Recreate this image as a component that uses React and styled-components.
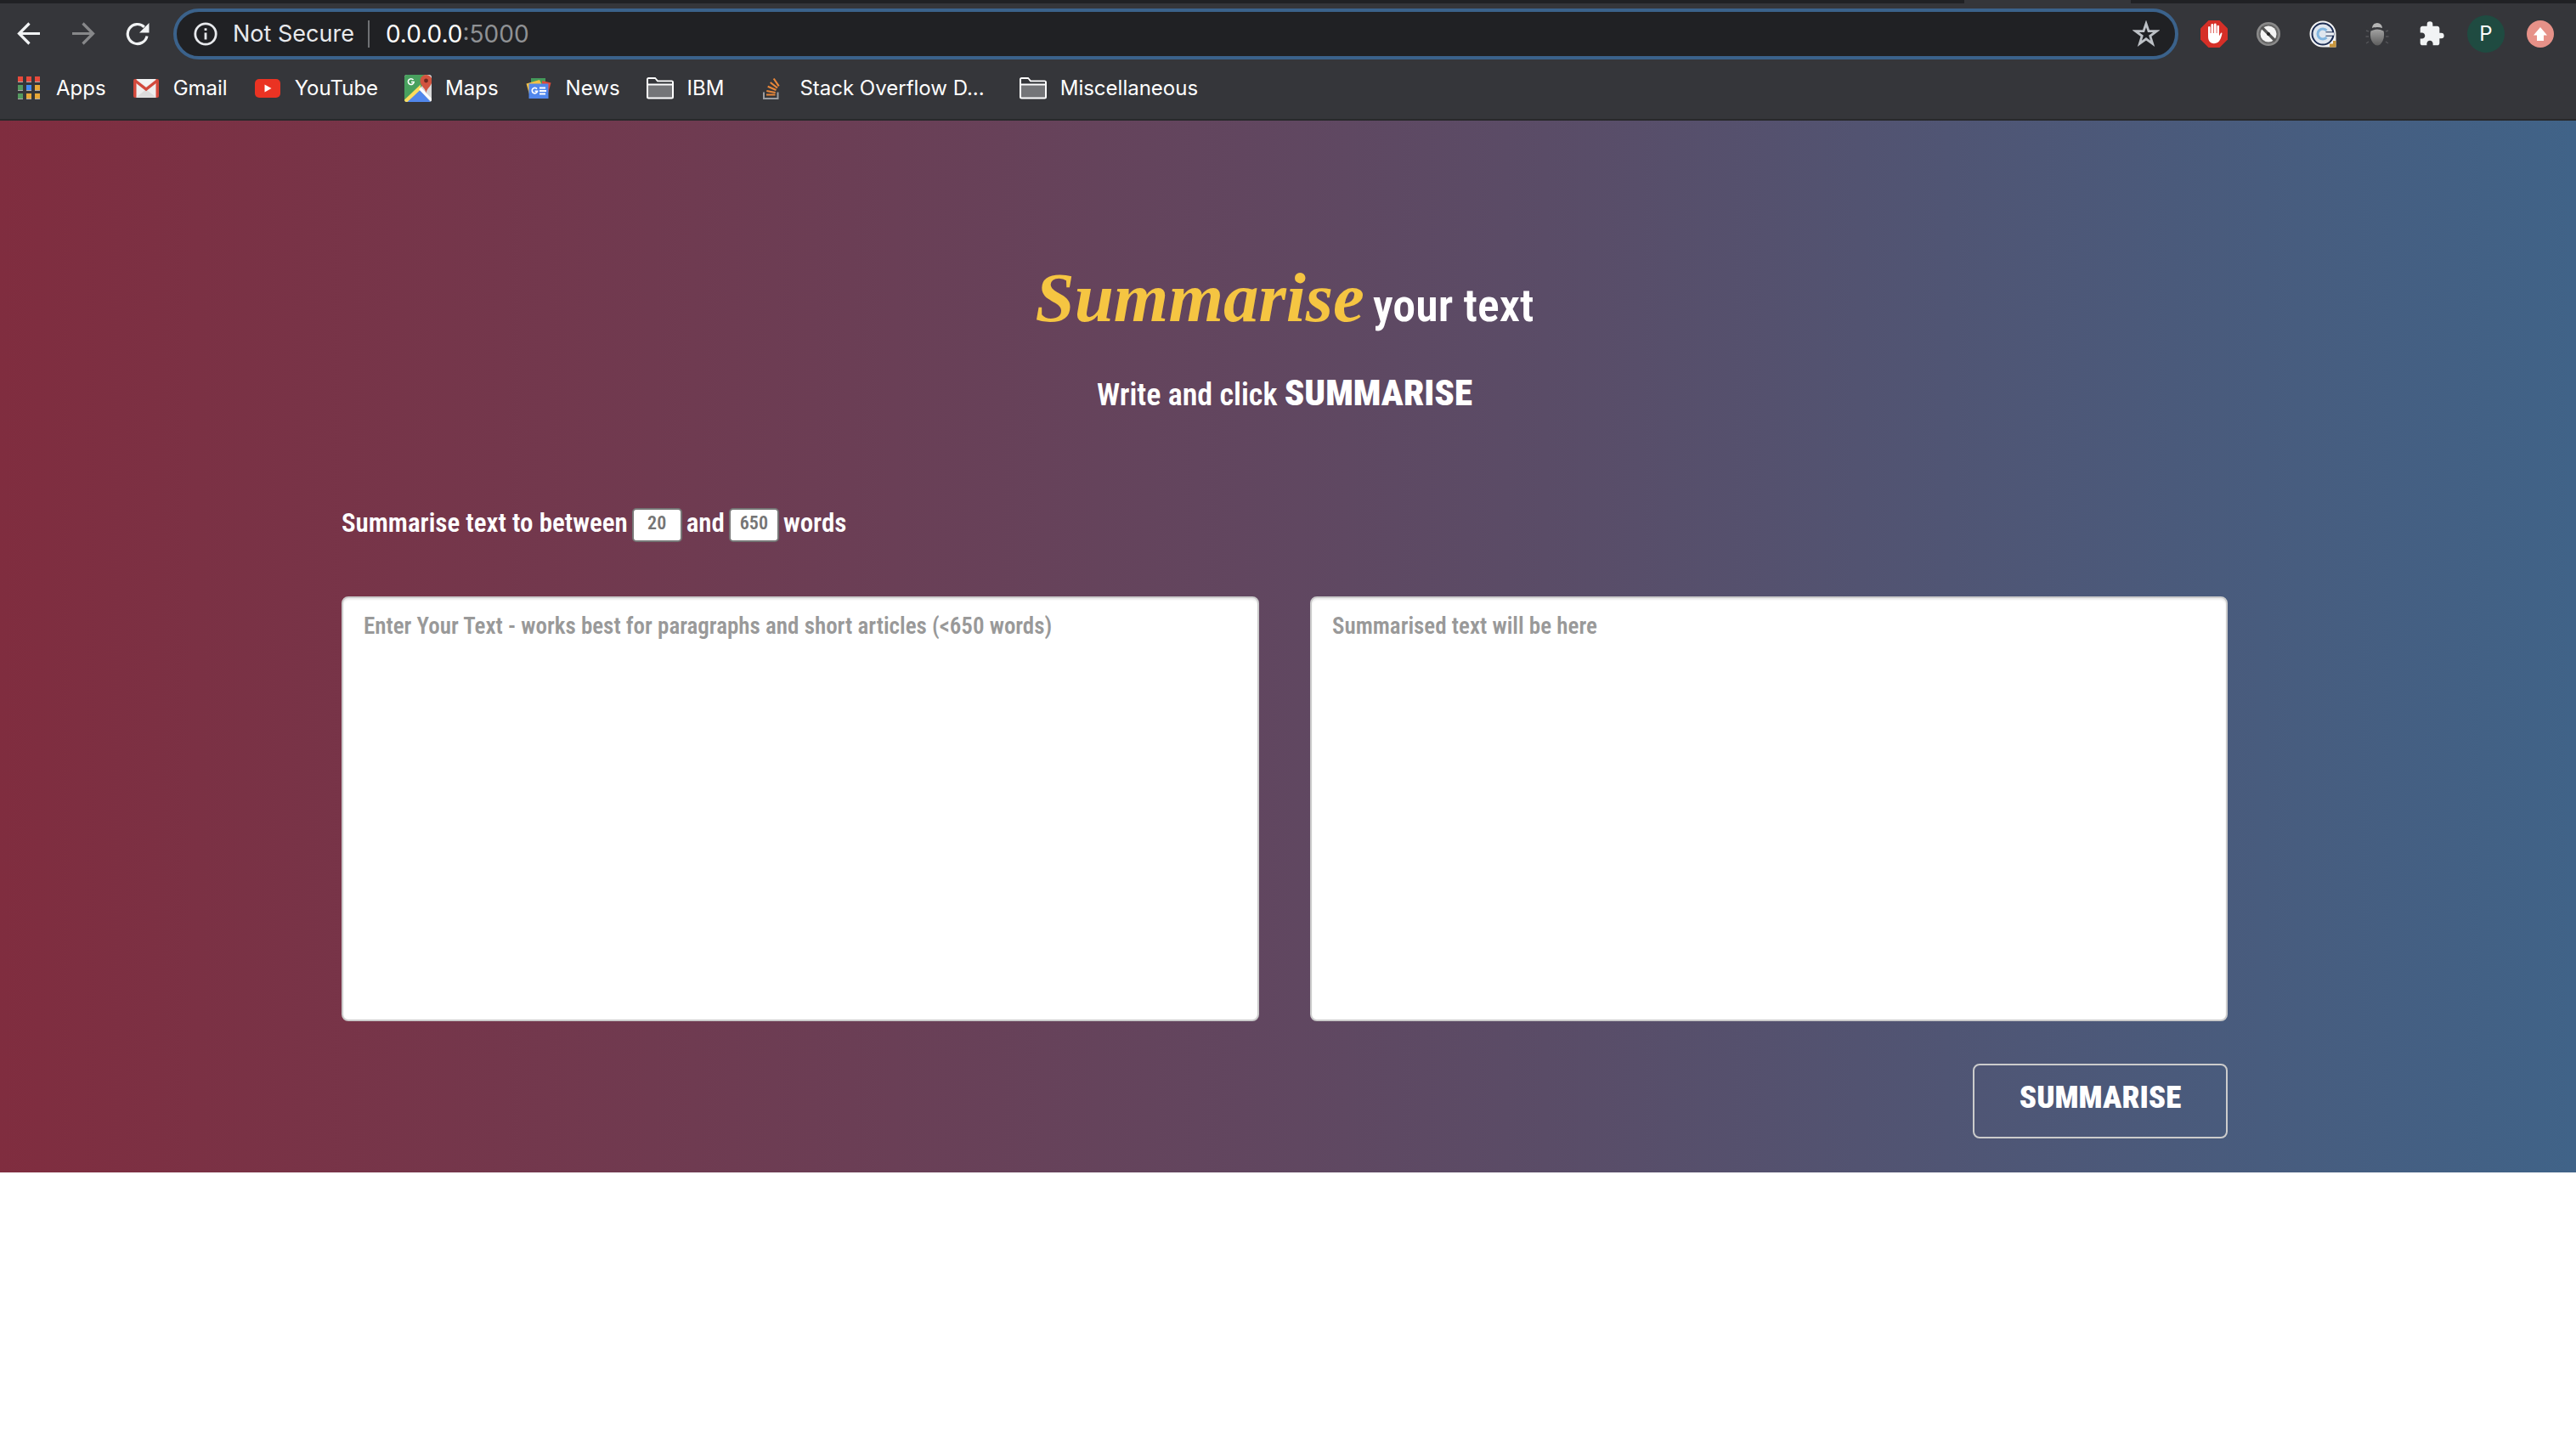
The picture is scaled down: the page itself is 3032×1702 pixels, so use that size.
import React from "react";
import styled, { createGlobalStyle } from "styled-components";

const uiFont = `Inter, Roboto, "Liberation Sans", sans-serif`;
const pageFont = `"Roboto Condensed", Roboto, "Liberation Sans", sans-serif`;

const GlobalStyle = createGlobalStyle`
  *, *::before, *::after { box-sizing: border-box; }
  body { margin: 0; background: #fff; }
  svg { display: block; }
`;

/* ---------- browser chrome ---------- */

const Chrome = styled.header`
  background: #35363a;
  border-bottom: 2px solid #28292b;
  font-family: ${uiFont};
  color: #fff;
`;

const TabStrip = styled.div`
  display: flex;
  justify-content: flex-end;
  height: 4px;
  background: #202124;
  padding-right: 524px;
`;

const ActiveTab = styled.div`
  width: 196px;
  background: #35363a;
`;

const Toolbar = styled.div`
  display: flex;
  align-items: center;
  height: 72px;
  padding: 0 10px 0 2px;
`;

const ToolButton = styled.button`
  flex: none;
  display: flex;
  align-items: center;
  justify-content: center;
  width: 64px;
  height: 60px;
  padding: 0;
  border: 0;
  background: none;
  color: ${(p) => p.$tone || "#f1f3f4"};
`;

const Omnibox = styled.div`
  flex: 1;
  display: flex;
  align-items: center;
  height: 60px;
  margin: 0 10px;
  padding: 0 18px 0 20px;
  border: 4px solid #3b628b;
  border-radius: 30px;
  background: #202124;
`;

const Security = styled.span`
  display: flex;
  align-items: center;
  gap: 18px;
  padding-right: 16px;
  border-right: 2px solid #6f7174;
  font-size: 27px;
  line-height: 32px;
  color: #e8eaed;
  white-space: nowrap;
`;

const Address = styled.div`
  flex: 1;
  padding-left: 19px;
  font-size: 28px;
  line-height: 32px;
  color: #fff;
`;

const Port = styled.span`
  color: #8f9194;
`;

const StarButton = styled.button`
  display: flex;
  padding: 0;
  border: 0;
  background: none;
`;

const Avatar = styled.span`
  display: grid;
  place-items: center;
  width: 44px;
  height: 44px;
  border-radius: 50%;
  background: #1f4b41;
  color: #fff;
  font: 24px/44px ${uiFont};
`;

const Bookmarks = styled.nav`
  display: flex;
  align-items: center;
  gap: 31px;
  height: 64px;
  padding: 0 18px 8px;
`;

const Bookmark = styled.a`
  display: flex;
  align-items: center;
  gap: 16px;
  padding-left: ${(p) => (p.$wide ? "10px" : "0")};
  font-size: 24px;
  line-height: 32px;
  color: #fff;
  text-decoration: none;
  white-space: nowrap;
`;

/* ---------- page ---------- */

const Hero = styled.main`
  padding: 142px 8px 40px 0;
  background: linear-gradient(to right, #802d3f 0%, #5a4c67 60%, #406388 100%);
  font-family: ${pageFont};
  font-weight: 600;
  color: #fff;
`;

const Container = styled.form`
  width: 100%;
  max-width: 2220px;
  margin: 0 auto;
`;

const Title = styled.h1`
  display: flex;
  justify-content: center;
  align-items: baseline;
  gap: 10px;
  margin: 0;
  font-size: 54px;
  line-height: 132px;
  font-weight: 600;
`;

const Script = styled.span`
  font-family: "Liberation Serif", serif;
  font-style: italic;
  font-weight: 700;
  font-size: 83px;
  color: #f5c542;
`;

const Lead = styled.p`
  margin: 0;
  text-align: center;
  font-size: 36px;
  line-height: 72px;
`;

const Heavy = styled.strong`
  font-weight: 900;
  font-size: 43px;
`;

const Range = styled.div`
  display: flex;
  align-items: center;
  gap: 5px;
  margin-top: 97px;
`;

const RangeLabel = styled.label`
  padding-bottom: 4px;
  font-size: 31px;
  line-height: 36px;
`;

const CountInput = styled.input`
  width: 59px;
  height: 40px;
  padding: 0 0 6px;
  border: 2px solid #767676;
  border-radius: 5px;
  background: #fff;
  font: 600 22px/28px ${pageFont};
  text-align: center;
  color: #333;
  &::placeholder { color: #757575; opacity: 1; }
`;

const Panels = styled.div`
  display: grid;
  grid-template-columns: 1fr 1fr;
  gap: 60px;
  margin-top: 64px;
`;

const TextPanel = styled.textarea`
  display: block;
  width: 100%;
  height: 500px;
  padding: 14px 24px;
  border: 2px solid #ccc;
  border-radius: 8px;
  background: #fff;
  box-shadow: inset 0 2px 2px rgba(0, 0, 0, 0.075);
  font: 600 27px/38px ${pageFont};
  color: #555;
  resize: none;
  &::placeholder { color: #999; opacity: 1; }
`;

const Actions = styled.div`
  display: flex;
  justify-content: flex-end;
  margin-top: 50px;
`;

const SubmitButton = styled.button`
  width: 300px;
  height: 88px;
  padding: 0 0 8px;
  border: 2px solid #ccc;
  border-radius: 8px;
  background: transparent;
  font: 900 37px/44px ${pageFont};
  color: #fff;
`;

/* ---------- icons ---------- */

const Arrow = ({ back }) => (
  <svg width="28" height="28" viewBox="0 0 28 28" fill="none" stroke="currentColor" strokeWidth="3.2">
    {back ? <path d="M27 13.5H3M14.5 1.5L2.5 13.5l12 12" /> : <path d="M1 13.5h24M13.5 1.5l12 12-12 12" />}
  </svg>
);

const Reload = () => (
  <svg width="28" height="28" viewBox="0 0 28 28">
    <path d="M25 16.5A11.5 11.5 0 1 1 21.8 5.8" fill="none" stroke="currentColor" strokeWidth="3.2" />
    <path d="M27.5 1v11.5H16z" fill="currentColor" />
  </svg>
);

const Info = () => (
  <svg width="28" height="28" viewBox="0 0 28 28">
    <circle cx="14" cy="14" r="12.2" fill="none" stroke="#e8eaed" strokeWidth="2.8" />
    <path d="M12.6 7.3h2.8v2.8h-2.8zM12.6 12.4h2.8v8.2h-2.8z" fill="#e8eaed" />
  </svg>
);

const Star = () => (
  <svg width="32" height="32" viewBox="0 0 32 32">
    <path d="M16 3.8l3 8.8 9.3.1-7.5 5.6 2.8 9-7.6-5.5-7.6 5.5 2.8-9-7.5-5.6 9.3-.1z" fill="none" stroke="#bdc1c6" strokeWidth="2.8" />
  </svg>
);

const Blocker = () => (
  <svg width="32" height="32" viewBox="0 0 32 32">
    <path d="M9.5 0h13L32 9.5v13L22.5 32h-13L0 22.5v-13z" fill="#d52f27" />
    <path d="M9 17V8.2a1.3 1.3 0 0 1 2.6 0V15h.8V5.5a1.4 1.4 0 0 1 2.8 0V15h.7V5a1.4 1.4 0 0 1 2.8 0v10h.7V7a1.3 1.3 0 0 1 2.6 0v11.5l1.500-3c.6-1.400 2.200-1.200 1.900.3-1 4.200-2.400 11.400-9.400 11.400C11 27.200 9 23.500 9 19z" fill="#fff" />
  </svg>
);

const Disabled = () => (
  <svg width="30" height="30" viewBox="0 0 30 30">
    <circle cx="15" cy="15" r="14" fill="#8a8a8a" />
    <circle cx="15" cy="15" r="11.5" fill="#666" />
    <circle cx="15" cy="15" r="9.5" fill="#f4f4f4" />
    <path d="M7 7l16 16" stroke="#555" strokeWidth="3.2" />
    <circle cx="15" cy="15" r="2" fill="#222" />
  </svg>
);

const Target = () => (
  <svg width="32" height="32" viewBox="0 0 32 32">
    <path d="M16 .5a15.5 15.5 0 1 0 0 31h15.5V16A15.5 15.5 0 0 0 16 .5z" fill="#f4f4f4" />
    <circle cx="16" cy="16" r="12.5" fill="#dfe6ee" stroke="#1b2c52" strokeWidth="2" />
    <path d="M20.5 12a6 6 0 1 0 0 8" fill="none" stroke="#82b6e0" strokeWidth="3" />
    <path d="M20 14.2h9v3.6h-9z" fill="#eef2f6" />
    <path d="M19.5 13.8H29M19.5 18.2H29" stroke="#1b2c52" strokeWidth="1" />
    <path d="M31.5 24v7.5H24v-4h4V24z" fill="#c9963c" />
  </svg>
);

const Bug = () => (
  <svg width="30" height="30" viewBox="0 0 30 30">
    <defs>
      <linearGradient id="bugBody" x1="0" y1="0" x2="0" y2="1">
        <stop offset="0" stopColor="#a2a2a2" />
        <stop offset="1" stopColor="#5e5e5e" />
      </linearGradient>
    </defs>
    <path d="M5 12L2 11M5 18H1.5M5 24l-3 2M25 12l3-1M25 18h3.5M25 24l3 2" stroke="#55565a" strokeWidth="1.5" />
    <path d="M9 8a6 6 0 0 1 12 0q-6-2-12 0z" fill="#b5b5b5" />
    <path d="M7.5 11.5q7.5-4 15 0 1.5 6-1 11.5-2.5 5.5-6.5 5.5T8.5 23Q6 17.5 7.5 11.5z" fill="url(#bugBody)" />
  </svg>
);

const Puzzle = () => (
  <svg width="32" height="32" viewBox="0 0 24 24">
    <path fill="#f1f3f4" d="M20.5 11H19V7c0-1.1-.9-2-2-2h-4V3.5a2.5 2.5 0 0 0-5 0V5H4c-1.1 0-1.99.9-1.99 2v3.8H3.5c1.49 0 2.7 1.21 2.7 2.7s-1.21 2.7-2.7 2.7H2V20c0 1.1.9 2 2 2h3.8v-1.5c0-1.49 1.21-2.7 2.7-2.7 1.49 0 2.7 1.21 2.7 2.7V22H17c1.1 0 2-.9 2-2v-4h1.5a2.5 2.5 0 0 0 0-5z" />
  </svg>
);

const Update = () => (
  <svg width="32" height="32" viewBox="0 0 32 32">
    <circle cx="16" cy="16" r="16" fill="#e69188" />
    <path d="M16 8l8 9.5h-4V24h-8v-6.5H8z" fill="#fff" />
  </svg>
);

const dots = ["#e74a3b", "#e74a3b", "#e74a3b", "#549a5f", "#428af3", "#e8a837", "#549a5f", "#e8a837", "#e8a837"];

const AppsIcon = () => (
  <svg width="32" height="32" viewBox="0 0 32 32">
    {dots.map((c, i) => (
      <g key={i}>
        <rect x={3 + (i % 3) * 10} y={2 + Math.floor(i / 3) * 10} width="6" height="7" fill="#aaa" />
        <rect x={3 + (i % 3) * 10} y={2 + Math.floor(i / 3) * 10} width="6" height="6" fill={c} />
      </g>
    ))}
  </svg>
);

const GmailIcon = () => (
  <svg width="32" height="32" viewBox="0 0 32 32">
    <rect x="1" y="5" width="30" height="22" rx="2" fill="#d2493c" />
    <path d="M4.5 5h23v22h-23z" fill="#eee" />
    <path d="M4.5 26.5L16 17l11.5 9.5z" fill="#dcdcdc" />
    <path d="M2.5 6.5L16 17 29.5 6.5" fill="none" stroke="#d2493c" strokeWidth="3.4" />
    <path d="M5 5h22l-11 8.5z" fill="#f3f3f3" />
  </svg>
);

const YouTubeIcon = () => (
  <svg width="32" height="32" viewBox="0 0 32 32">
    <rect x="1" y="5" width="30" height="22" rx="5" fill="#ea3323" />
    <path d="M12.5 11.5v9l8-4.5z" fill="#fff" />
  </svg>
);

const MapsIcon = () => (
  <svg width="32" height="32" viewBox="0 0 32 32">
    <defs>
      <clipPath id="mapsTile"><rect width="32" height="32" rx="3" /></clipPath>
    </defs>
    <g clipPath="url(#mapsTile)">
      <path d="M0 0h32v32H0z" fill="#d9d9d9" />
      <path d="M0 0h24l-3 13L0 32z" fill="#48a05e" />
      <path d="M2 32l15-15 14 15z" fill="#5187ec" />
      <path d="M0 29.5L19 11.5v6L3.5 32H0z" fill="#fbdc5e" />
      <path d="M17 17l15 15v-4L19.5 15z" fill="#fff" />
    </g>
    <path d="M10.5 6a3.4 3.4 0 1 0 .7 2.5H8" fill="none" stroke="#fff" strokeWidth="1.6" />
    <path d="M25.5 22c0-6-7-8.5-7-15a7 7 0 0 1 14 0c0 6.5-7 9-7 15z" fill="#d2543f" />
    <circle cx="25.5" cy="7" r="2.4" fill="#6d2a20" />
  </svg>
);

const NewsIcon = () => (
  <svg width="32" height="32" viewBox="0 0 32 32">
    <path d="M7 4h17v8H7z" fill="#449a5a" />
    <path d="M20 7l10.5 2.5L27 22h-7z" fill="#dd4a3b" />
    <path d="M1.5 10.5L17 6l4 8-16 9z" fill="#f3c044" />
    <path d="M4.5 10.5h23V28h-23z" fill="#5187ec" />
    <path d="M14 16.6a3.2 3.2 0 1 0 .6 2.8H11.5" fill="none" stroke="#fff" strokeWidth="1.7" />
    <path d="M17 15.5h7M17 19h8M17 22.5h7" stroke="#fff" strokeWidth="1.8" />
  </svg>
);

const FolderIcon = () => (
  <svg width="32" height="32" viewBox="0 0 32 32">
    <path d="M1 5.5Q1 4 2.5 4H10l3 3.5h16.500q1.500 0 1.500 1.500v17q0 1.500-1.500 1.500h-27Q1 27.500 1 26z" fill="#747578" stroke="#fff" strokeWidth="2" />
    <path d="M2 5h8l2.5 3.5H30V11H2z" fill="#35363a" />
    <path d="M1 11.5h30" stroke="#fff" strokeWidth="2" />
  </svg>
);

const StackIcon = () => (
  <svg width="32" height="32" viewBox="0 0 32 32">
    <path d="M6 20.5V28h16.5v-7.5" fill="none" stroke="#9b9da1" strokeWidth="2" />
    <path d="M9 23.5h10.5M9.3 19l10.4 2M10.7 13.8l9.8 4.3M13.7 9l8.3 6.5M17.7 4.5l6 8.8" stroke="#e8873a" strokeWidth="2.2" />
  </svg>
);

const bookmarks = [
  { label: "Apps", Icon: AppsIcon },
  { label: "Gmail", Icon: GmailIcon },
  { label: "YouTube", Icon: YouTubeIcon },
  { label: "Maps", Icon: MapsIcon },
  { label: "News", Icon: NewsIcon },
  { label: "IBM", Icon: FolderIcon },
  { label: "Stack Overflow D...", Icon: StackIcon, wide: true },
  { label: "Miscellaneous", Icon: FolderIcon, wide: true },
];

const extensions = [
  { label: "Ad blocker", Icon: Blocker },
  { label: "Disabled extension", Icon: Disabled },
  { label: "Capture", Icon: Target },
  { label: "Debugger", Icon: Bug },
  { label: "Extensions", Icon: Puzzle },
];

export default function App() {
  return (
    <>
      <GlobalStyle />
      <Chrome>
        <TabStrip><ActiveTab /></TabStrip>
        <Toolbar>
          <ToolButton aria-label="Back"><Arrow back /></ToolButton>
          <ToolButton aria-label="Forward" $tone="#87888a"><Arrow /></ToolButton>
          <ToolButton aria-label="Reload"><Reload /></ToolButton>
          <Omnibox>
            <Security><Info />Not Secure</Security>
            <Address>0.0.0.0<Port>:5000</Port></Address>
            <StarButton aria-label="Bookmark this page"><Star /></StarButton>
          </Omnibox>
          {extensions.map(({ label, Icon }) => (
            <ToolButton key={label} aria-label={label}><Icon /></ToolButton>
          ))}
          <ToolButton aria-label="Profile"><Avatar>P</Avatar></ToolButton>
          <ToolButton aria-label="Update"><Update /></ToolButton>
        </Toolbar>
        <Bookmarks>
          {bookmarks.map(({ label, Icon, wide }) => (
            <Bookmark key={label} href="#" $wide={wide}><Icon />{label}</Bookmark>
          ))}
        </Bookmarks>
      </Chrome>
      <Hero>
        <Container onSubmit={(e) => e.preventDefault()}>
          <Title><Script>Summarise</Script> <span>your text</span></Title>
          <Lead>Write and click <Heavy>SUMMARISE</Heavy></Lead>
          <Range>
            <RangeLabel htmlFor="min">Summarise text to between</RangeLabel>
            <CountInput id="min" placeholder="20" />
            <RangeLabel htmlFor="max">and</RangeLabel>
            <CountInput id="max" placeholder="650" />
            <RangeLabel as="span">words</RangeLabel>
          </Range>
          <Panels>
            <TextPanel aria-label="Text to summarise" placeholder="Enter Your Text - works best for paragraphs and short articles (<650 words)" />
            <TextPanel aria-label="Summary" placeholder="Summarised text will be here" />
          </Panels>
          <Actions>
            <SubmitButton type="submit">SUMMARISE</SubmitButton>
          </Actions>
        </Container>
      </Hero>
    </>
  );
}
